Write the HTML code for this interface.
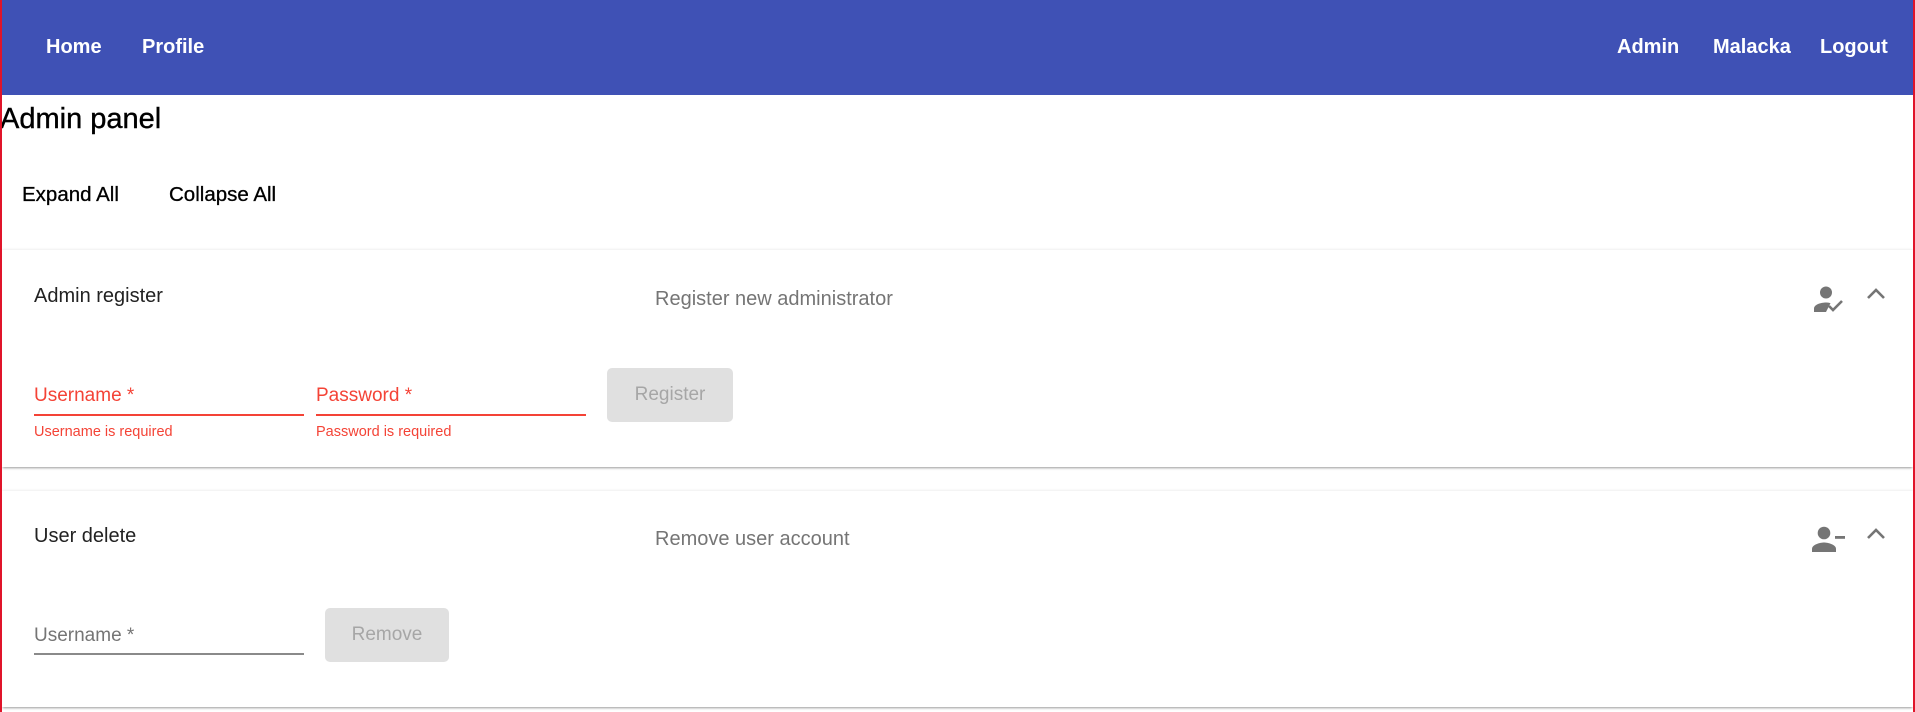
<!DOCTYPE html>
<html><head><meta charset="utf-8"><style>
*{margin:0;padding:0;box-sizing:border-box}
html,body{width:1915px;height:712px;overflow:hidden;background:#fff;font-family:"Liberation Sans",Arial,sans-serif}
body{position:relative}
.bl{position:absolute;top:0;width:2px;height:712px;background:#e0142a;z-index:10}
.a{position:absolute;white-space:nowrap;line-height:1}
.bar{position:absolute;left:0;top:0;width:1915px;height:95px;background:#3f51b5}
.nav{color:#fff;font-weight:bold;font-size:20px;top:37px}
.panel{position:absolute;left:2px;width:1911px;background:#fff;box-shadow:0 2px 2px -1px rgba(0,0,0,.3),0 1px 3px rgba(0,0,0,.12),0 -1px 2px rgba(0,0,0,.04)}
.t{font-size:20px;color:#222}
.d{font-size:20px;color:#757575}
.lab{font-size:19px}
.line{position:absolute;height:2px}
.err{font-size:14.5px;color:#f44336}
.btn{position:absolute;background:#e0e0e0;border-radius:5px;color:#a6a6a6;font-size:19px;display:flex;align-items:center;justify-content:center}
</style></head><body>
<div class="bar"></div>
<div class="bl" style="left:0"></div>
<div class="bl" style="left:1913px"></div>
<div class="a nav" style="left:46px">Home</div>
<div class="a nav" style="left:142px">Profile</div>
<div class="a nav" style="left:1617px">Admin</div>
<div class="a nav" style="left:1713px">Malacka</div>
<div class="a nav" style="left:1820px">Logout</div>

<div class="a" style="left:0;top:105px;font-size:29px;color:#000;-webkit-text-stroke:0.4px #000">Admin panel</div>
<div class="a" style="left:22px;top:185px;font-size:20.5px;color:#000;-webkit-text-stroke:0.3px #000">Expand All</div>
<div class="a" style="left:169px;top:185px;font-size:20.5px;color:#000;-webkit-text-stroke:0.3px #000">Collapse All</div>

<div class="panel" style="top:250px;height:217px"></div>
<div class="a t" style="left:34px;top:286px">Admin register</div>
<div class="a d" style="left:655px;top:289px">Register new administrator</div>
<svg class="a" style="left:1813px;top:285px" width="32" height="28" viewBox="0 0 32 28"><circle cx="13" cy="7.5" r="6" fill="#757575"/><path d="M1 27v-3.5c0-4 7-6 12-6 1.5 0 3 .3 4.5.6L13 27z" fill="#757575"/><path d="M16 21l4 4 9-9" stroke="#757575" stroke-width="2.6" fill="none"/></svg>
<svg class="a" style="left:1866px;top:287px" width="20" height="14" viewBox="0 0 20 14"><path d="M2 11l8-8 8 8" stroke="#757575" stroke-width="2.6" fill="none"/></svg>

<div class="a lab" style="left:34px;top:386px;color:#f44336">Username *</div>
<div class="line" style="left:34px;top:414px;width:270px;background:#f44336"></div>
<div class="a err" style="left:34px;top:425px">Username is required</div>
<div class="a lab" style="left:316px;top:386px;color:#f44336">Password *</div>
<div class="line" style="left:316px;top:414px;width:270px;background:#f44336"></div>
<div class="a err" style="left:316px;top:425px">Password is required</div>
<div class="btn" style="left:607px;top:368px;width:126px;height:54px">Register</div>

<div class="panel" style="top:491px;height:216px"></div>
<div class="a t" style="left:34px;top:526px">User delete</div>
<div class="a d" style="left:655px;top:529px">Remove user account</div>
<svg class="a" style="left:1812px;top:525px" width="34" height="28" viewBox="0 0 34 28"><circle cx="12" cy="8" r="6.3" fill="#757575"/><path d="M0 27v-3c0-4.5 8-6.5 12-6.5s12 2 12 6.5v3z" fill="#757575"/><rect x="23" y="11" width="10" height="2.8" fill="#757575"/></svg>
<svg class="a" style="left:1866px;top:527px" width="20" height="14" viewBox="0 0 20 14"><path d="M2 11l8-8 8 8" stroke="#757575" stroke-width="2.6" fill="none"/></svg>

<div class="a lab" style="left:34px;top:626px;color:#757575">Username *</div>
<div class="line" style="left:34px;top:653px;width:270px;background:#8a8a8a"></div>
<div class="btn" style="left:325px;top:608px;width:124px;height:54px">Remove</div>
</body></html>
